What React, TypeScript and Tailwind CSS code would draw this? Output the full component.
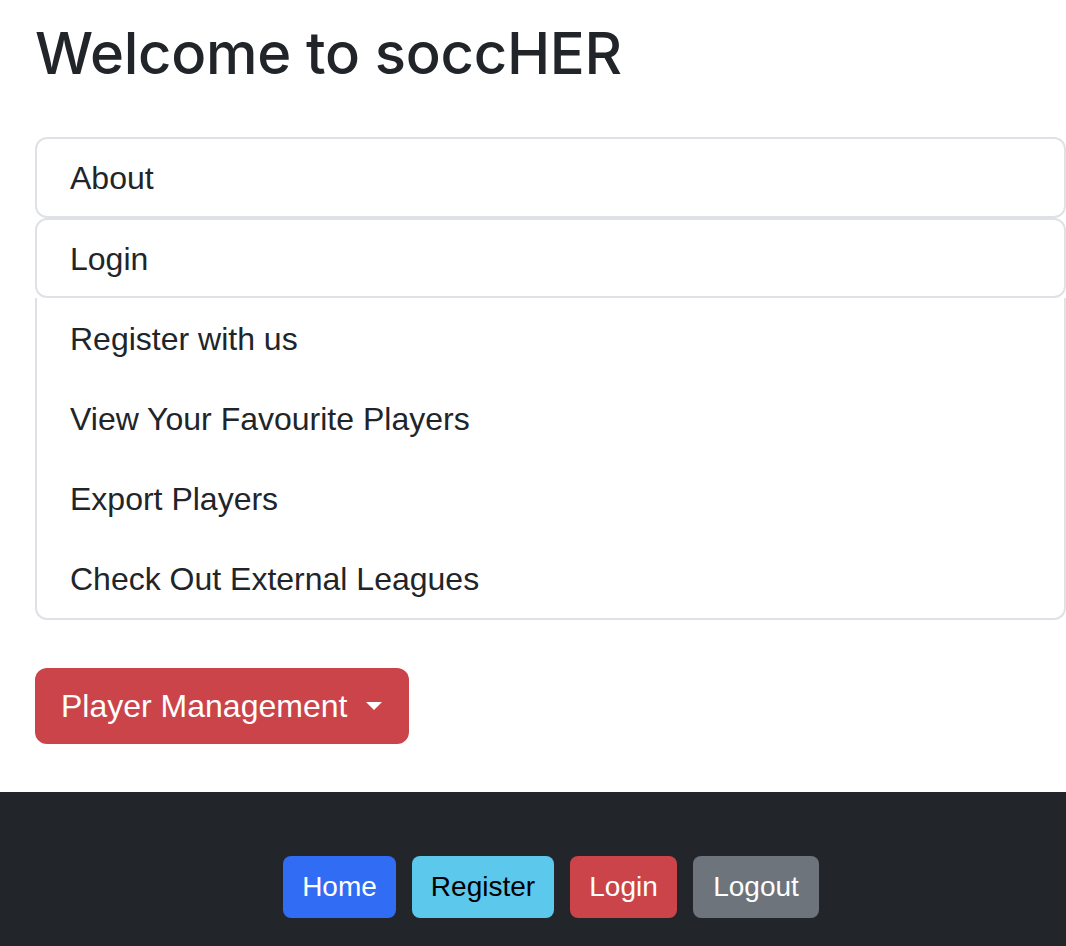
import React from "react";

const topItems = ["About", "Login"];
const moreItems = [
  "Register with us",
  "View Your Favourite Players",
  "Export Players",
  "Check Out External Leagues",
];

const footerButtons = [
  { label: "Home", cls: "w-[113px] bg-[#316cf4] text-white" },
  { label: "Register", cls: "w-[142px] bg-[#5bc8ec] text-black" },
  { label: "Login", cls: "w-[107px] bg-[#cb444a] text-white" },
  { label: "Logout", cls: "w-[126px] bg-[#6d747c] text-white" },
];

export default function App() {
  return (
    <div className="min-h-[946px] bg-white font-['Liberation_Sans',Arial,sans-serif] text-[#212529] overflow-hidden">
      <main className="pl-[35px] pt-[17px] pb-[48px]">
        <h1 className="font-['Inter',sans-serif] text-[58px] leading-[72px] font-medium tracking-[-0.3px]">
          Welcome to soccHER
        </h1>

        <div className="mt-[48px] w-[1031px]">
          {topItems.map((item, i) => (
            <div
              key={item}
              className={`flex items-center pt-[1px] px-[33px] border-2 border-[#dee2e6] rounded-[12px] text-[32px] ${
                i === 0 ? "h-[81px]" : "h-[80px]"
              }`}
            >
              {item}
            </div>
          ))}
          <div className="border-2 border-t-0 border-[#dee2e6] rounded-b-[12px]">
            {moreItems.map((item) => (
              <div key={item} className="flex items-center h-[80px] pt-[1px] px-[33px] text-[32px]">
                {item}
              </div>
            ))}
          </div>
        </div>

        <button className="mt-[48px] flex items-center h-[76px] pl-[26px] pr-[27px] rounded-[12px] bg-[#cb444a] text-white text-[32px]">
          Player Management
          <span className="ml-[19px] w-0 h-0 border-l-[8px] border-r-[8px] border-t-[8px] border-l-transparent border-r-transparent border-t-white" />
        </button>
      </main>

      <footer className="bg-[#222529] h-[160px] pt-[64px] pl-[36px] flex justify-center items-start gap-[16px]">
        {footerButtons.map((b) => (
          <button
            key={b.label}
            className={`h-[62px] rounded-[8px] text-[28px] flex items-center justify-center ${b.cls}`}
          >
            {b.label}
          </button>
        ))}
      </footer>
    </div>
  );
}
